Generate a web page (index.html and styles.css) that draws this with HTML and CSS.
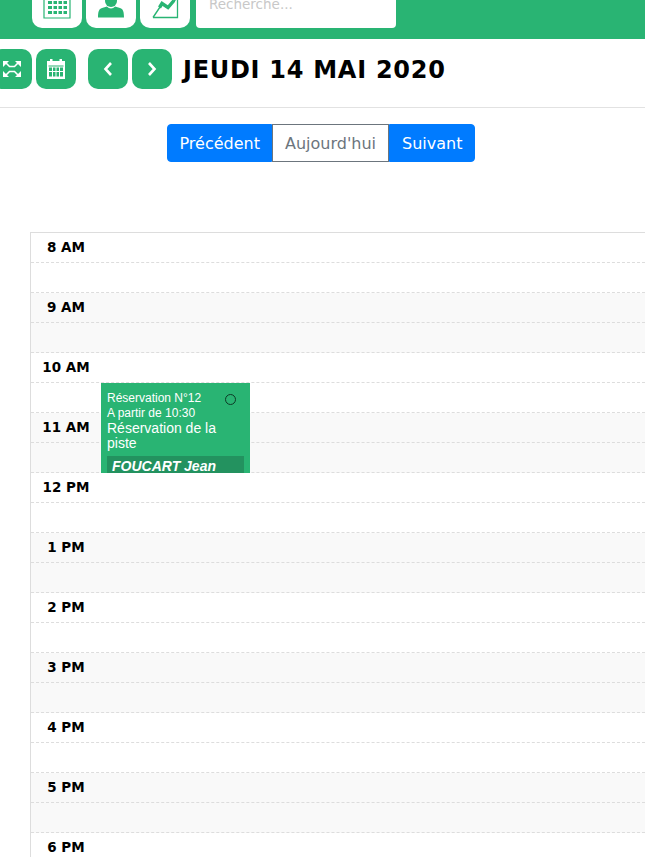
FILE: index.html
```html
<!DOCTYPE html>
<html lang="fr">
<head>
<meta charset="utf-8">
<title>Agenda</title>
<link rel="stylesheet" href="styles.css">
</head>
<body>
<header class="topbar">
  <a class="top-btn"><svg width="30" height="24" viewBox="0 0 30 24"><path d="M2 -4h26v22H2z" fill="none" stroke="#29b473" stroke-width="1.200"/><g fill="#29b473"><rect x="6" y="1" width="4" height="3"/><rect x="11.500" y="1" width="3.500" height="3"/><rect x="16.500" y="1" width="3.500" height="3"/><rect x="21.500" y="1" width="3.500" height="3"/><rect x="6" y="6" width="4" height="3"/><rect x="11.500" y="6" width="3.500" height="3"/><rect x="16.500" y="6" width="3.500" height="3"/><rect x="21.500" y="6" width="3.500" height="3"/><rect x="6" y="11" width="4" height="3"/><rect x="11.500" y="11" width="3.500" height="3"/><rect x="16.500" y="11" width="3.500" height="3"/><rect x="21.500" y="11" width="3.500" height="3"/></g></svg></a>
  <a class="top-btn"><svg width="30" height="24" viewBox="0 0 30 24"><circle cx="15" cy="1" r="6" fill="#29b473"/><path d="M2 17.500c0-6 1-8.500 4-9.500l5-1.500c2 2.500 6 2.500 8 0l5 1.500c3 1 4 3.500 4 9.500z" fill="#29b473"/></svg></a>
  <a class="top-btn"><svg width="30" height="24" viewBox="0 0 30 24"><path d="M27.500 -2v19.500H3" fill="none" stroke="#29b473" stroke-width="1.300"/><path d="M3 17.500 12 4l6 4 8-9" fill="none" stroke="#29b473" stroke-width="1.400"/><path d="M9.500 7.500 12 3.500l6 4 6-7" fill="none" stroke="#29b473" stroke-width="3.400"/></svg></a>
  <div class="search">Recherche...</div>
</header>

<section class="toolbar">
  <a class="tool-btn"><svg width="20" height="20" viewBox="0 0 20 20" fill="none"><path d="M3 3l4.500 4.500h5L17 3M3 17l4.500-4.500h5L17 17" stroke="#fff" stroke-width="1.600"/><g fill="#fff"><path d="M1 2h6L1 8zM19 2h-6l6 6zM1 18h6l-6-6zM19 18h-6l6-6z"/></g></svg></a>
  <a class="tool-btn"><svg width="20" height="22" viewBox="0 0 20 22"><path fill="#fff" d="M1 3h3V1h2.500v2h7V1H16v2h3v18H1z"/><g fill="#29b473"><rect x="2.500" y="7.500" width="15" height="1"/><rect x="3" y="9.500" width="3" height="3.500"/><rect x="7" y="9.500" width="2.500" height="3.500"/><rect x="10.500" y="9.500" width="2.500" height="3.500"/><rect x="14" y="9.500" width="3" height="3.500"/><rect x="3" y="14" width="3" height="4.500"/><rect x="7" y="14" width="2.500" height="4.500"/><rect x="10.500" y="14" width="2.500" height="4.500"/><rect x="14" y="14" width="3" height="4.500"/></g></svg></a>
  <a class="tool-btn nav-first"><svg width="12" height="16" viewBox="0 0 12 16"><path d="M9 2 3.500 8 9 14" fill="none" stroke="#fff" stroke-width="2.600"/></svg></a>
  <a class="tool-btn"><svg width="12" height="16" viewBox="0 0 12 16"><path d="M3 2l5.500 6L3 14" fill="none" stroke="#fff" stroke-width="2.600"/></svg></a>
  <h1 class="date">JEUDI 14 MAI 2020</h1>
</section>

<div class="pager">
  <div class="btn-group">
    <a class="pg pg-primary pg-left">Précédent</a>
    <a class="pg pg-outline">Aujourd'hui</a>
    <a class="pg pg-primary pg-right">Suivant</a>
  </div>
</div>

<section class="grid">
  <div class="slot"><span class="hour">8 AM</span></div><div class="slot"></div>
  <div class="slot alt"><span class="hour">9 AM</span></div><div class="slot alt"></div>
  <div class="slot"><span class="hour">10 AM</span></div><div class="slot"></div>
  <div class="slot alt"><span class="hour">11 AM</span></div><div class="slot alt"></div>
  <div class="slot"><span class="hour">12 PM</span></div><div class="slot"></div>
  <div class="slot alt"><span class="hour">1 PM</span></div><div class="slot alt"></div>
  <div class="slot"><span class="hour">2 PM</span></div><div class="slot"></div>
  <div class="slot alt"><span class="hour">3 PM</span></div><div class="slot alt"></div>
  <div class="slot"><span class="hour">4 PM</span></div><div class="slot"></div>
  <div class="slot alt"><span class="hour">5 PM</span></div><div class="slot alt"></div>
  <div class="slot"><span class="hour">6 PM</span></div><div class="slot"></div>
  <article class="event">
    <span class="event-dot"></span>
    <div class="event-small">Réservation N°12</div>
    <div class="event-small">A partir de 10:30</div>
    <div class="event-title">Réservation de la piste</div>
    <div class="event-name">FOUCART Jean</div>
  </article>
</section>
</body>
</html>
```
FILE: styles.css
```css
* { box-sizing: border-box; }
html, body { margin: 0; height: 857px; overflow: hidden; background: #fff; }
body { font-family: "DejaVu Sans", Verdana, sans-serif; color: #000; }

.topbar {
  height: 39px;
  background: #29b473;
  display: flex;
  align-items: flex-end;
  gap: 4px;
  padding: 0 0 11px 32px;
  overflow: hidden;
}
.top-btn {
  width: 50px;
  height: 50px;
  flex: none;
  background: #fff;
  border-radius: 10px;
  display: flex;
  align-items: flex-end;
  justify-content: center;
  padding-bottom: 4px;
}
.search {
  width: 200px;
  height: 40px;
  margin-left: 2px;
  background: #fff;
  border-radius: 4px;
  color: #c8c8c8;
  font-size: 13.500px;
  line-height: 15px;
  padding: 9px 0 0 13px;
  overflow: hidden;
}

.toolbar {
  height: 69px;
  border-bottom: 1px solid #e2e2e2;
  display: flex;
  align-items: flex-start;
  gap: 4px;
  padding: 10px 0 0;
  margin-left: -8px;
}
.tool-btn {
  width: 40px;
  height: 40px;
  flex: none;
  background: #29b473;
  border-radius: 10px;
  display: flex;
  align-items: center;
  justify-content: center;
}
.nav-first { margin-left: 8px; }
.date {
  margin: 1px 0 0 7px;
  font-size: 24px;
  line-height: 40px;
  font-weight: 700;
  letter-spacing: 0.72px;
  white-space: nowrap;
}

.pager {
  display: flex;
  justify-content: center;
  padding: 16px 3px 0 0;
  height: 124px;
}
.btn-group { display: flex; height: 38px; }
.pg {
  font-size: 16px;
  line-height: 38px;
  border: 1px solid #007bff;
  padding: 0 12px;
}
.pg-primary { background: #007bff; color: #fff; }
.pg-left { border-radius: 4px 0 0 4px; padding-right: 11px; }
.pg-right { border-radius: 0 4px 4px 0; }
.pg-outline { border-color: #6c757d; color: #6c757d; background: #fff; }

.grid {
  position: relative;
  margin-left: 30px;
  border-top: 1px solid #ddd;
  border-left: 1px solid #ddd;
}
.slot {
  height: 30px;
  border-bottom: 1px dashed #ddd;
  padding-left: 5px;
}
.alt { background: #f9f9f9; }
.hour {
  display: block;
  width: 60px;
  text-align: center;
  white-space: nowrap;
  font-size: 13.500px;
  line-height: 28px;
  font-weight: 700;
}
.event {
  position: absolute;
  left: 70px;
  top: 150px;
  width: 149px;
  height: 90px;
  overflow: hidden;
  background: #29b473;
  color: #fff;
  font-family: "Liberation Sans", Arial, sans-serif;
  padding: 8px 6px 0;
}
.event-small { font-size: 12px; line-height: 15px; }
.event-title { font-size: 14px; line-height: 15px; }
.event-name {
  margin-top: 5px;
  background: #23925f;
  font-size: 14px;
  line-height: 17px;
  font-weight: 700;
  font-style: italic;
  padding: 2px 0 0 5px;
}
.event-dot {
  position: absolute;
  right: 14px;
  top: 11px;
  width: 11px;
  height: 11px;
  border: 1.500px solid #0d3a26;
  border-radius: 50%;
}
```
